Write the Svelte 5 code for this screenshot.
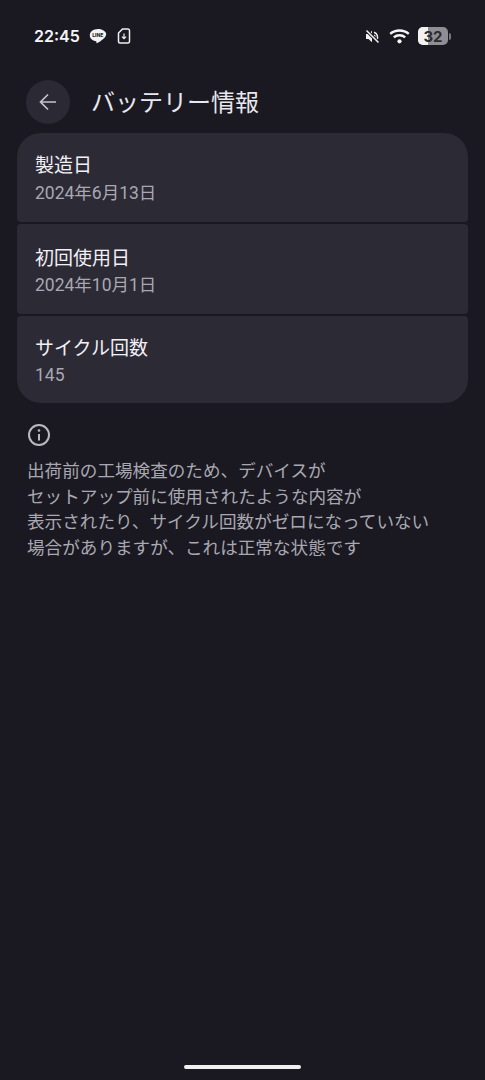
<script lang="ts">
	const rows = [
		{ label: '製造日', value: '2024年6月13日', cls: 'first' },
		{ label: '初回使用日', value: '2024年10月1日', cls: 'middle' },
		{ label: 'サイクル回数', value: '145', cls: 'last' }
	];
	const notes = [
		'出荷前の工場検査のため、デバイスが',
		'セットアップ前に使用されたような内容が',
		'表示されたり、サイクル回数がゼロになっていない',
		'場合がありますが、これは正常な状態です'
	];
</script>

<div class="screen">
	<div class="status">
		<div class="left">
			<span class="time">22:45</span>
			<span class="line">
				<svg width="18" height="17" viewBox="0 0 18 17">
					<path d="M9 1C4.300 1 .8 3.800.8 7.300c0 3.200 2.700 5.600 6.300 6 .5.100.4.700.3 1.500 0 .5.300.6.800.3 1.900-1.100 6.300-3.800 7.900-6.200.7-.9 1.100-1.800 1.100-2.700C17.200 3.700 13.700 1 9 1z" fill="#f2f2f2"/>
				</svg>
				<b>LINE</b>
			</span>
			<svg class="sim" width="14" height="16" viewBox="0 0 14 16" fill="none" stroke="#f0f0f0" stroke-width="1.500">
				<path d="M5.500 1h5.500a1.500 1.500 0 0 1 1.500 1.500v11a1.500 1.500 0 0 1-1.500 1.500H3a1.500 1.500 0 0 1-1.500-1.500V5z"/>
				<path d="M7 5.500v5M4.900 8.600 7 10.700l2.100-2.100" stroke-width="1.200"/>
			</svg>
		</div>
		<div class="right">
			<svg width="17" height="17" viewBox="0 0 17 17" fill="#f2f2f2">
				<path d="M2 6h2.500L8 2.800v11.400L4.500 11H2z"/>
				<path d="M10 4.200a5 5 0 0 1 2.800 7.400M10 7a2 2 0 0 1 .8 2.200" fill="none" stroke="#f2f2f2" stroke-width="1.500"/>
				<path d="M2.500 2.500 14.500 14.500" stroke="#1a1921" stroke-width="3.400"/>
				<path d="M2.500 2.500 14.500 14.500" stroke="#f2f2f2" stroke-width="1.500"/>
			</svg>
			<svg width="21" height="16" viewBox="0 0 21 16" fill="none" stroke="#f5f5f5" stroke-width="2.400">
				<path d="M1.200 5.800c5.200-4.500 13.400-4.500 18.600 0"/>
				<path d="M4.800 9.300c3.200-2.700 8.200-2.700 11.400 0"/>
				<circle cx="10.500" cy="13.300" r="2.100" fill="#f5f5f5" stroke="none"/>
			</svg>
			<div class="battery">
				<div class="cell"><span class="fill"></span><span class="level">32</span></div>
				<span class="nub"></span>
			</div>
		</div>
	</div>

	<header>
		<button class="back" aria-label="戻る">
			<svg width="20" height="20" viewBox="0 0 20 20" fill="none" stroke="#c4c3cc" stroke-width="1.700">
				<path d="M18 10H2.500M10 2.500 2.500 10l7.500 7.500"/>
			</svg>
		</button>
		<h1>バッテリー情報</h1>
	</header>

	<div class="list">
		{#each rows as row}
			<div class="row {row.cls}">
				<strong>{row.label}</strong>
				<small>{row.value}</small>
			</div>
		{/each}
	</div>

	<div class="note">
		<svg width="24" height="24" viewBox="0 0 24 24" fill="none" stroke="#b9b8c1" stroke-width="2">
			<circle cx="12" cy="12" r="10"/>
			<path d="M12 11v6.500"/>
			<circle cx="12" cy="7.500" r="1.300" fill="#b9b8c1" stroke="none"/>
		</svg>
		<p>
			{#each notes as line}
				<span>{line}</span>
			{/each}
		</p>
	</div>

	<div class="home"><span></span></div>
</div>

<style>
	:global(body) {
		background: #1a1921;
	}

	.screen {
		display: flex;
		flex-direction: column;
		height: 1080px;
		background: #1a1921;
		font-family: Roboto, 'Noto Sans CJK JP', sans-serif;
		overflow: hidden;
	}

	.status {
		display: flex;
		justify-content: space-between;
		align-items: center;
		height: 24px;
		margin-top: 24px;
		padding: 0 34px;
	}

	.left,
	.right {
		display: flex;
		align-items: center;
	}

	.time {
		font-family: Inter, sans-serif;
		font-size: 16px;
		font-weight: 600;
		color: #f5f5f5;
		margin-right: 9px;
	}

	.line {
		position: relative;
		display: flex;
	}

	.line b {
		position: absolute;
		left: 0;
		right: 0;
		top: 4px;
		text-align: center;
		font-family: Inter, sans-serif;
		font-size: 5px;
		line-height: 7px;
		font-weight: 800;
		color: #26262c;
	}

	.sim {
		margin-left: 10px;
	}

	.right {
		gap: 8px;
	}

	.battery {
		display: flex;
		align-items: center;
		gap: 1px;
	}

	.cell {
		position: relative;
		display: flex;
		align-items: center;
		justify-content: center;
		width: 30px;
		height: 18px;
		border-radius: 5px;
		background: #8f8f93;
		overflow: hidden;
	}

	.fill {
		position: absolute;
		left: 0;
		top: 0;
		bottom: 0;
		width: 10px;
		background: #f2f2f2;
	}

	.level {
		position: relative;
		font-family: Inter, sans-serif;
		font-size: 15px;
		font-weight: 700;
		color: #2b2b30;
	}

	.nub {
		width: 2px;
		height: 7px;
		border-radius: 0 2px 2px 0;
		background: #77777b;
	}

	header {
		display: flex;
		align-items: center;
		gap: 22px;
		height: 44px;
		margin-top: 32px;
		padding-left: 26px;
	}

	.back {
		display: flex;
		align-items: center;
		justify-content: center;
		width: 44px;
		height: 44px;
		padding: 0;
		border: 0;
		border-radius: 50%;
		background: #2a2934;
	}

	h1 {
		margin: 2px 0 0 -1px;
		font-size: 24px;
		line-height: 44px;
		font-weight: 400;
		color: #e8e7ee;
	}

	.list {
		display: flex;
		flex-direction: column;
		gap: 2px;
		margin: 9px 17px 0;
	}

	.row {
		display: flex;
		flex-direction: column;
		justify-content: center;
		box-sizing: border-box;
		height: 89px;
		padding: 3px 18px 0;
		background: #2c2a35;
		border-radius: 4px;
	}

	.row small {
		margin-top: 1px;
		font-size: 17.500px;
		line-height: 25px;
		color: #a9a8b1;
	}

	.first {
		border-radius: 24px 24px 4px 4px;
	}

	.middle {
		height: 90px;
		padding-top: 4px;
	}

	.last {
		height: 87px;
		padding-top: 4px;
		border-radius: 4px 4px 24px 24px;
	}

	.middle small,
	.last small {
		margin-top: 0;
	}

	.row strong {
		font-size: 19px;
		line-height: 28px;
		font-weight: 400;
		color: #f1f0f5;
	}

	.note {
		display: flex;
		flex-direction: column;
		align-items: flex-start;
		gap: 12px;
		margin-top: 20px;
		padding-left: 27px;
	}

	.note p {
		display: flex;
		flex-direction: column;
		margin: 0;
		font-size: 17.600px;
		line-height: 25.700px;
		color: #a9a8b1;
		white-space: nowrap;
	}

	.home {
		display: flex;
		justify-content: center;
		margin-top: auto;
		padding-bottom: 11px;
	}

	.home span {
		width: 117px;
		height: 4px;
		border-radius: 2px;
		background: #f0f0f0;
	}
</style>
